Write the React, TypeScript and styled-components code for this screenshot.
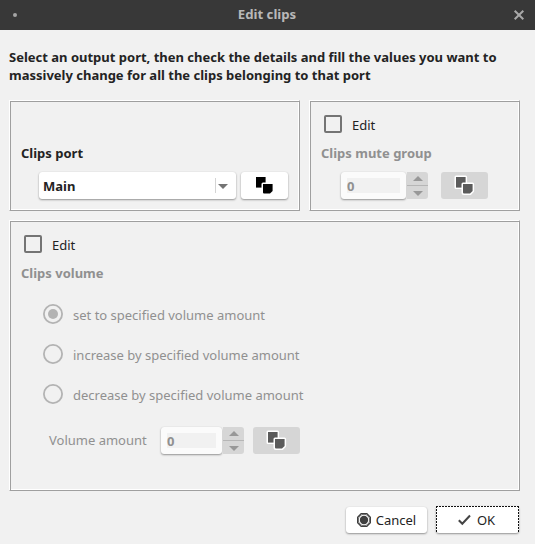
import React from "react";
import styled, { createGlobalStyle, css } from "styled-components";

const GlobalStyle = createGlobalStyle`
  * { box-sizing: border-box; }
  body {
    margin: 0;
    background: #f1f1f1;
    font-family: "Noto Sans", sans-serif;
    font-size: 13px;
    line-height: 18px;
    color: #232323;
  }
  button { font: inherit; color: inherit; }
`;

const Dialog = styled.div`
  width: 535px;
  height: 544px;
  display: flex;
  flex-direction: column;
  background: #f1f1f1;
  overflow: hidden;
`;

const TitleBar = styled.header`
  height: 30px;
  flex: none;
  display: grid;
  grid-template-columns: 32px 1fr 32px;
  align-items: center;
  justify-items: center;
  background: #383838;
  color: #b8b8b8;
`;

const Title = styled.h1`
  margin: 0;
  padding: 0 1px 2px 0;
  font-size: 13.2px;
  line-height: 18px;
  font-weight: 700;
  white-space: nowrap;
`;

const Dot = styled.span`
  width: 4px;
  height: 4px;
  margin-right: 2px;
  border-radius: 50%;
  background: #a5a5a5;
`;

const Intro = styled.p`
  margin: 0;
  padding: 18px 9px 16px;
  font-weight: 700;
  white-space: nowrap;
`;

const Content = styled.main`
  display: grid;
  grid-template-columns: 291px 211px;
  grid-template-rows: 111px 271px;
  column-gap: 9px;
  row-gap: 9px;
  padding-left: 9px;
`;

const Frame = styled.section<{ $wide?: boolean }>`
  border: 1px solid;
  border-color: #fff #9f9f9f #9f9f9f #fff;
  box-shadow: inset 1px 1px 0 #9f9f9f, inset -1px -1px 0 #fff;
  ${(p) => p.$wide && css`grid-column: 1 / -1;`}
  padding: 13px 0 0 11px;
`;

const CheckLabel = styled.div`
  height: 20px;
  display: flex;
  align-items: center;
  gap: 10px;
  padding-left: 3px;
  span { padding-top: 2px; }
`;

const CheckSquare = styled.i`
  width: 18px;
  height: 18px;
  border: 2px solid #747474;
  border-radius: 2px;
`;

const GroupTitle = styled.h2<{ $disabled?: boolean }>`
  margin: 10px 0 0;
  font-size: inherit;
  line-height: 18px;
  font-weight: 700;
  color: ${(p) => (p.$disabled ? "#909090" : "#232323")};
`;

const ControlRow = styled.div<{ $indent: number; $top: number }>`
  display: flex;
  align-items: center;
  height: 27px;
  margin: ${(p) => p.$top}px 0 0 ${(p) => p.$indent}px;
`;

const raised = css`
  background: #fff;
  border-radius: 3px;
  box-shadow: 0 1px 2px rgba(0, 0, 0, 0.38), 0 0 1px rgba(0, 0, 0, 0.12);
`;

const Combo = styled.div`
  ${raised}
  width: 197px;
  height: 27px;
  display: flex;
  align-items: center;
  padding: 0 8px 0 4px;
  font-weight: 700;
  span { flex: 1; padding-top: 1px; }
`;

const ComboArrow = styled.i`
  height: 15px;
  padding: 1px 0 0 2px;
  border-left: 1px solid #d4d4d4;
  display: flex;
  align-items: center;
`;

const ToolButton = styled.button<{ $gap: number }>`
  ${raised}
  width: 47px;
  height: 27px;
  border: 0;
  padding: 0;
  margin-left: ${(p) => p.$gap}px;
  display: flex;
  align-items: center;
  justify-content: center;
  &:disabled { background: #d6d6d6; box-shadow: none; }
  svg { overflow: visible; }
`;

const SpinField = styled.div<{ $width: number }>`
  ${raised}
  background: #fbfbfb;
  width: ${(p) => p.$width}px;
  height: 27px;
  padding: 6px;
`;

const SpinValue = styled.div`
  height: 15px;
  background: #f1f1f1;
  color: #909090;
  font-weight: 700;
  line-height: 17px;
`;

const SpinArrows = styled.div`
  width: 21px;
  height: 27px;
  margin-left: 1px;
  border-radius: 0 3px 3px 0;
  background: #d6d6d6;
  display: grid;
  grid-template-rows: 13px 14px;
`;

const ArrowCell = styled.span`
  display: flex;
  align-items: center;
  justify-content: center;
  & + & { border-top: 1px solid #b6b6b6; padding-top: 2px; }
  &:first-child { padding-bottom: 1px; }
`;

const RadioList = styled.div`
  display: grid;
  gap: 20px;
  margin-top: 22px;
  padding-left: 22px;
  color: #909090;
`;

const RadioRow = styled.div`
  height: 20px;
  display: flex;
  align-items: center;
  gap: 10px;
  span { padding-top: 2px; }
`;

const FieldLabel = styled.span`
  width: 112px;
  padding-bottom: 1px;
  color: #909090;
`;

const Footer = styled.footer`
  display: flex;
  justify-content: flex-end;
  gap: 9px;
  padding: 15px 16px 0 0;
`;

const FooterButton = styled.button<{ $focused?: boolean }>`
  ${raised}
  display: flex;
  align-items: center;
  justify-content: center;
  gap: 5px;
  border: 0;
  padding: 0;
  width: 81px;
  height: 26px;
  margin-top: 1px;
  ${(p) =>
    p.$focused &&
    css`
      position: relative;
      gap: 6px;
      padding-right: 2px;
      width: 83px;
      height: 27px;
      margin-top: 0;
    `}
`;

const FocusRing = styled.svg`
  position: absolute;
  inset: 0;
`;

const Close = () => (
  <svg width="12" height="12" viewBox="0 0 12 12">
    <path d="M1.7 1.7 10.3 10.3M10.3 1.7 1.7 10.3" stroke="#a9a9a9" strokeWidth="2" />
  </svg>
);

const Triangle = ({ up, fill }: { up?: boolean; fill: string }) => (
  <svg width="10" height="5" viewBox="0 0 10 5">
    <path d={up ? "M0 5 5 0 10 5Z" : "M0 0 5 5 10 0Z"} fill={fill} />
  </svg>
);

const sheets = ["M1 1H10.6V11.6H1Z", "M8 8H17.6V15L15 17.6H9Q8 17.6 8 16.6Z"];

const CopyIcon = ({ disabled }: { disabled?: boolean }) => (
  <svg width="19" height="19" viewBox="0 0 19 19">
    {sheets.map((d) => (
      <g key={d}>
        <path d={d} fill="#fff" stroke="#fff" strokeWidth="3" strokeLinejoin="round" />
        <path d={d} fill={disabled ? "#5b5b5b" : "#000"} />
      </g>
    ))}
  </svg>
);

const Radio = ({ checked }: { checked?: boolean }) => (
  <svg width="20" height="20" viewBox="0 0 20 20">
    <circle cx="10" cy="10" r="9.1" fill="none" stroke="#b3b3b3" strokeWidth="1.8" />
    {checked && <circle cx="10" cy="10" r="5" fill="#b3b3b3" />}
  </svg>
);

const CancelIcon = () => (
  <svg width="14" height="14" viewBox="0 0 14 14">
    <path d="M4.2.6H9.8L13.4 4.2V9.8L9.8 13.4H4.2L.6 9.8V4.2Z" fill="none" stroke="#3f3f3f" strokeWidth="1.3" />
    <circle cx="7" cy="7" r="5.7" fill="none" stroke="#3f3f3f" strokeWidth=".7" />
    <circle cx="7" cy="7" r="4.2" fill="#3f3f3f" />
  </svg>
);

const CheckIcon = () => (
  <svg width="13" height="12" viewBox="0 0 13 12">
    <path d="M.8 6.3 4.3 9.8 12 1.5" fill="none" stroke="#444" strokeWidth="2" />
  </svg>
);

const EditCheck = () => (
  <CheckLabel>
    <CheckSquare />
    <span>Edit</span>
  </CheckLabel>
);

const SpinBox = ({ width }: { width: number }) => (
  <>
    <SpinField $width={width}>
      <SpinValue>0</SpinValue>
    </SpinField>
    <SpinArrows>
      <ArrowCell><Triangle up fill="#989898" /></ArrowCell>
      <ArrowCell><Triangle fill="#989898" /></ArrowCell>
    </SpinArrows>
  </>
);

const volumeModes = [
  "set to specified volume amount",
  "increase by specified volume amount",
  "decrease by specified volume amount",
];

export default function App() {
  return (
    <>
      <GlobalStyle />
      <Dialog>
        <TitleBar>
          <Dot />
          <Title>Edit clips</Title>
          <Close />
        </TitleBar>
        <Intro>
          Select an output port, then check the details and fill the values you want to
          <br />
          massively change for all the clips belonging to that port
        </Intro>
        <Content>
          <Frame>
            <CheckLabel />
            <GroupTitle>Clips port</GroupTitle>
            <ControlRow $indent={18} $top={10}>
              <Combo>
                <span>Main</span>
                <ComboArrow><Triangle fill="#747474" /></ComboArrow>
              </Combo>
              <ToolButton $gap={5}><CopyIcon /></ToolButton>
            </ControlRow>
          </Frame>
          <Frame>
            <EditCheck />
            <GroupTitle $disabled>Clips mute group</GroupTitle>
            <ControlRow $indent={20} $top={10}>
              <SpinBox width={65} />
              <ToolButton $gap={13} disabled><CopyIcon disabled /></ToolButton>
            </ControlRow>
          </Frame>
          <Frame $wide>
            <EditCheck />
            <GroupTitle $disabled>Clips volume</GroupTitle>
            <RadioList>
              {volumeModes.map((mode, i) => (
                <RadioRow key={mode}>
                  <Radio checked={i === 0} />
                  <span>{mode}</span>
                </RadioRow>
              ))}
            </RadioList>
            <ControlRow $indent={28} $top={23}>
              <FieldLabel>Volume amount</FieldLabel>
              <SpinBox width={61} />
              <ToolButton $gap={9} disabled><CopyIcon disabled /></ToolButton>
            </ControlRow>
          </Frame>
        </Content>
        <Footer>
          <FooterButton>
            <CancelIcon />
            Cancel
          </FooterButton>
          <FooterButton $focused>
            <FocusRing width="83" height="27">
              <path d="M0 .5H83M.5 0V27M82.5 0V27" fill="none" stroke="#111" strokeDasharray="2 1" />
            </FocusRing>
            <CheckIcon />
            OK
          </FooterButton>
        </Footer>
      </Dialog>
    </>
  );
}
